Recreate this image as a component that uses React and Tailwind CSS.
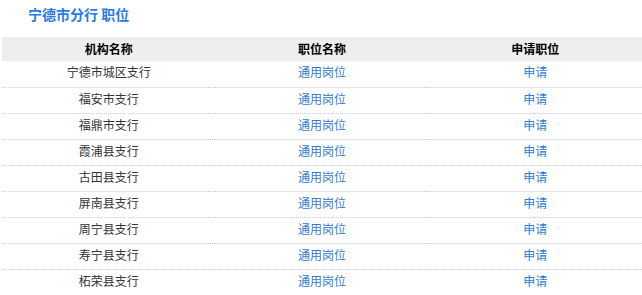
import React from "react";

const branches = [
  "宁德市城区支行",
  "福安市支行",
  "福鼎市支行",
  "霞浦县支行",
  "古田县支行",
  "屏南县支行",
  "周宁县支行",
  "寿宁县支行",
  "柘荣县支行",
];

export default function App() {
  return (
    <div
      className="bg-white w-[642px] h-[295px] overflow-hidden text-[12px]"
      style={{ fontFamily: '"Noto Sans CJK SC", "Noto Sans", sans-serif' }}
    >
      <div className="h-[37px] pl-[28px] pt-[5px]">
        <h2 className="text-[14px] leading-[18px] font-bold text-[#2a7ae2]">宁德市分行 职位</h2>
      </div>
      <table className="ml-[2px] w-[640px] table-fixed border-collapse">
        <thead>
          <tr className="bg-[#eeeeee] h-[24px]">
            <th className="font-bold text-black text-center p-0">机构名称</th>
            <th className="font-bold text-black text-center p-0">职位名称</th>
            <th className="font-bold text-black text-center p-0">申请职位</th>
          </tr>
        </thead>
        <tbody>
          {branches.map((name) => (
            <tr key={name} className="h-[26px]">
              <td className="text-center text-[#333333] border-b border-dotted border-[#cccccc] p-0 pb-[3px]">{name}</td>
              <td className="text-center border-b border-dotted border-[#cccccc] p-0 pb-[3px]">
                <a href="#" className="text-[#2f7bd6]">通用岗位</a>
              </td>
              <td className="text-center border-b border-dotted border-[#cccccc] p-0 pb-[3px]">
                <a href="#" className="text-[#2f7bd6]">申请</a>
              </td>
            </tr>
          ))}
        </tbody>
      </table>
    </div>
  );
}
